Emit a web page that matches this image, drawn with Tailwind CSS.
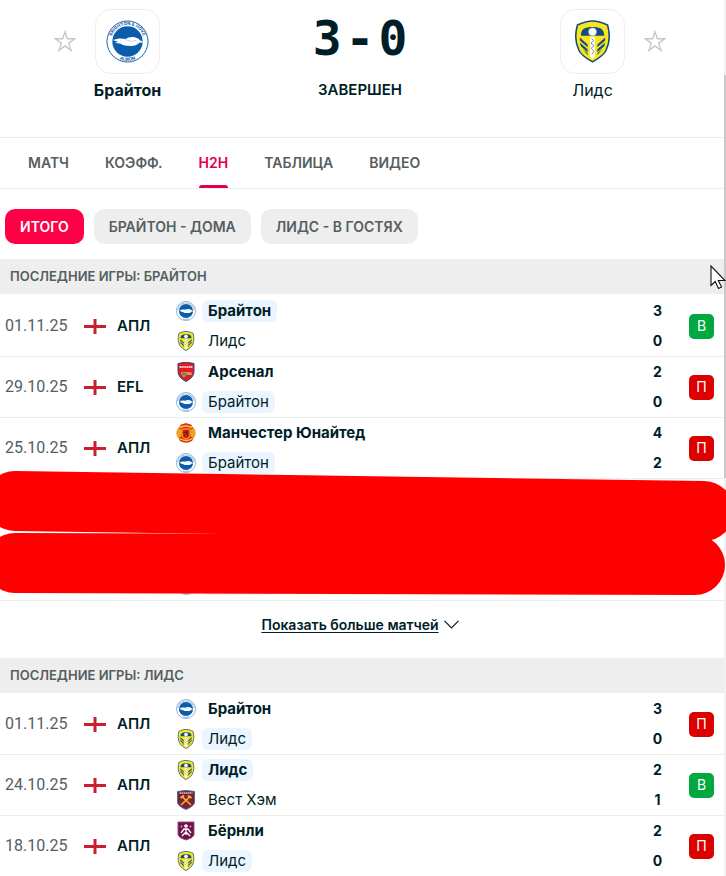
<!DOCTYPE html>
<html lang="ru">
<head>
<meta charset="utf-8">
<meta name="viewport" content="width=device-width, initial-scale=1">
<title>Брайтон – Лидс: H2H</title>
<script src="https://cdn.jsdelivr.net/npm/@tailwindcss/browser@4"></script>
</head>
<body class="relative overflow-x-hidden bg-white font-['Inter',sans-serif] text-[#001e28]">

<svg class="absolute h-0 w-0" aria-hidden="true">
  <symbol id="star" viewBox="0 0 24 24"><path d="M12 1.800l2.500 7.700h8.200l-6.600 4.800 2.500 7.900-6.600-4.900-6.600 4.900 2.500-7.900L1.300 9.500h8.200z" fill="none" stroke="#c4c8ca" stroke-width="1.500"/></symbol>
  <symbol id="brighton-core" viewBox="0 0 44 44">
    <circle cx="22" cy="22" r="21" fill="#fff" stroke="#1560a8" stroke-width="1"/>
    <circle cx="22" cy="22" r="15.500" fill="#0b5cab"/>
    <path d="M7 20.500c5-2 9-2 13-1 3-2.500 9-3 13-.5l2 2c1.500.3 3 1.500 2.500 2.300l-3-.3c-1.500 2-5 3.500-9 3.500-5 0-8-.5-11-2.500l-6-.5 4-1z" fill="#fff"/>
    <path d="M20 20q5 3 11 1" fill="none" stroke="#b9d2e8" stroke-width="1"/>
  </symbol>
  <symbol id="brighton" viewBox="0 0 44 44">
    <use href="#brighton-core"/>
    <path d="M4 20a18.200 18.200 0 0 1 36 0M15 39q7 3 14 0" fill="none" stroke="#7fa8d2" stroke-width="2.500" stroke-dasharray="2 1.200"/>
  </symbol>
  <symbol id="leeds" viewBox="0 0 36 44">
    <path d="M18 1C12 1 7 3 2.500 5 0 14 0 23 4 31c3 6 9 9 14 12 5-3 11-6 14-12 4-8 4-17 1.500-26C29 3 24 1 18 1z" fill="#f8e71c" stroke="#174a83" stroke-width="1.600"/>
    <path d="M6 16C6 9 10 7 18 7s12 2 12 9z" fill="#174a83"/>
    <path d="M5 18l8 7v3l-8-7zM5 23l8 7v3l-7-6zM8 30l5 4v2zM31 18l-8 7v3l8-7zM31 23l-8 7v3l7-6zM28 30l-5 4v2z" fill="#174a83"/>
    <circle cx="18" cy="12" r="4" fill="#fff" stroke="#b7cce0" stroke-width=".8"/>
    <path d="M15.500 17.500h5v20L18 40l-2.500-2.500z" fill="#fff"/>
    <path d="M17 19l2.500 2-3 2.500 3 3-3 2.500 3 3-2 3" fill="none" stroke="#6d8cad" stroke-width="1"/>
  </symbol>
  <symbol id="arsenal" viewBox="0 0 20 20">
    <path d="M2 1.500Q10-1 18 1.500v8q0 6-8 10-8-4-8-10z" fill="#e31c23" stroke="#37426f" stroke-width="1"/>
    <path d="M3.500 5h13" stroke="#fff" stroke-width="1.600" stroke-dasharray="1.500 .4"/>
    <path d="M5 10h9l2 1v2H5z" fill="#c29b63"/><circle cx="8" cy="13.500" r="2.300" fill="#a98d60" stroke="#7f2732" stroke-width=".6"/>
  </symbol>
  <symbol id="united" viewBox="0 0 20 20">
    <circle cx="10" cy="10" r="9" fill="#d92b16"/>
    <path d="M4 2l6-2 6 2-2 3H6zM4 18q6 3.500 12 0l1.500-3h-15z" fill="#dc2e17"/>
    <path d="M2.500 4.500Q-2 10 2.500 15.500l3-2.500V7zM17.500 4.500q4.500 5.500 0 11l-3-2.500V7z" fill="#eda220"/>
    <path d="M4 4.500q6-3 12 0M3.500 15.500q6.500 4 13 0" fill="none" stroke="#ffd43b" stroke-width="1.400"/>
    <path d="M6 6h8v6q0 3-4 4-4-1-4-4z" fill="#d52515" stroke="#fbcb2d" stroke-width=".9"/>
    <path d="M9 8h2v3l1 3M9 11l-1 3M7.500 9.500H12" fill="none" stroke="#6d2012" stroke-width="1"/>
  </symbol>
  <symbol id="westham" viewBox="0 0 20 20">
    <path d="M1.500 1.500Q10-.5 18.500 1.500V12q0 4-8.500 7.500Q1.500 16 1.500 12z" fill="#7a2139" stroke="#4c6d8e" stroke-width="1"/>
    <path d="M3.500 3h13" stroke="#d8bfc5" stroke-width="1.500" stroke-dasharray="1.500 .5"/>
    <path d="M5 15l9-8.500M15 15L6 6.500" stroke="#f3b52f" stroke-width="1.600"/>
    <path d="M4.500 8L8 5.500M12 5.500L15.500 8" stroke="#f3b52f" stroke-width="2"/>
  </symbol>
  <symbol id="burnley" viewBox="0 0 20 20">
    <path d="M2 1h16v13q-1 3-8 5-7-2-8-5z" fill="#70114d" stroke="#8e507a" stroke-width="1"/>
    <path d="M10 3v4M8 5h4M5 12l3-4h4l3 4M10 8v6M6 15l4-4 4 4" fill="none" stroke="#fff" stroke-width="1.300"/>
    <circle cx="5.500" cy="5.500" r="1" fill="#cfa2c0"/><circle cx="14.500" cy="5.500" r="1" fill="#cfa2c0"/>
  </symbol>
</svg>

<header class="flex h-[137px] items-start justify-between pt-[9px] pr-[60px] pl-[54px]">
  <div class="flex gap-[19px]">
    <button class="mt-5 h-6 w-[22px]" aria-label="Добавить Брайтон в избранное"><svg class="h-6 w-[22px]"><use href="#star"/></svg></button>
    <div class="flex w-[65px] flex-col items-center">
      <div class="flex h-[65px] w-[65px] items-center justify-center rounded-2xl border border-[#eeeeee]">
        <svg class="h-[43px] w-[43px]" viewBox="0 0 44 44">
          <use href="#brighton-core"/>
          <path id="arc-top" d="M5 22a17 17 0 0 1 34 0" fill="none"/>
          <path id="arc-bottom" d="M2.200 22a19.800 19.800 0 0 0 39.600 0" fill="none"/>
          <g fill="#1560a8" font-weight="700" font-size="4.500" text-anchor="middle">
            <text><textPath href="#arc-top" startOffset="50%">BRIGHTON &amp; HOVE</textPath></text>
            <text><textPath href="#arc-bottom" startOffset="50%">ALBION</textPath></text>
          </g>
        </svg>
      </div>
      <a href="#" class="mt-1 text-base leading-6 font-bold whitespace-nowrap">Брайтон</a>
    </div>
  </div>
  <div class="flex flex-col items-center">
    <div class="flex h-[58px] items-center gap-1 font-['DejaVu_Sans_Mono',monospace] text-[48px] font-bold"><span>3</span><span>-</span><span>0</span></div>
    <div class="mt-[11px] text-[15px] leading-6 font-semibold">ЗАВЕРШЕН</div>
  </div>
  <div class="flex gap-[19px]">
    <div class="flex w-[65px] flex-col items-center">
      <div class="flex h-[65px] w-[65px] items-center justify-center rounded-2xl border border-[#eeeeee]"><svg class="h-[43px] w-[35px]"><use href="#leeds"/></svg></div>
      <a href="#" class="mt-1 text-base leading-6 whitespace-nowrap">Лидс</a>
    </div>
    <button class="mt-5 h-6 w-[22px]" aria-label="Добавить Лидс в избранное"><svg class="h-6 w-[22px]"><use href="#star"/></svg></button>
  </div>
</header>

<nav class="flex h-[52px] gap-9 border-y border-[#eeeeee] px-7 text-sm font-semibold text-[#555e61]">
  <a href="#" class="flex items-center">МАТЧ</a>
  <a href="#" class="flex items-center">КОЭФФ.</a>
  <a href="#" class="relative flex items-center text-[#e00046]">H2H<span class="absolute inset-x-0 bottom-0 h-[3px] rounded-t-sm bg-[#e00046]"></span></a>
  <a href="#" class="flex items-center">ТАБЛИЦА</a>
  <a href="#" class="flex items-center">ВИДЕО</a>
</nav>

<div class="flex gap-[10px] px-[5px] pt-5 pb-[15px] text-sm font-semibold text-[#555e61]">
  <button class="h-[35px] rounded-[10px] bg-[#ff0046] px-[15px] text-white">ИТОГО</button>
  <button class="h-[35px] rounded-[10px] bg-[#eeeeee] px-[15px]">БРАЙТОН - ДОМА</button>
  <button class="h-[35px] rounded-[10px] bg-[#eeeeee] px-[15px]">ЛИДС - В ГОСТЯХ</button>
</div>

<section>
  <h2 class="flex h-[35px] items-center bg-[#eeeeee] px-[10px] text-[13px] font-semibold text-[#555e61]">ПОСЛЕДНИЕ ИГРЫ: БРАЙТОН</h2>
  <table class="mt-[2px] block w-full"><tbody id="home-games" class="block"></tbody></table>
  <div class="relative z-10 flex h-[122px] items-end border-b border-[#eeeeee] pb-[5px] pl-44">
    <svg class="h-5 w-5"><use href="#brighton"/></svg><span class="ml-[6px] h-[22px] w-[74px] rounded-md bg-[#ebf5ff]"></span>
    <svg class="absolute inset-x-0 -top-2 h-32 w-full" viewBox="0 0 726 128" preserveAspectRatio="none" aria-hidden="true">
      <g stroke="#ff0000" stroke-width="60" stroke-linecap="round"><path d="M15 30L704 40"/><path d="M15 92L695 94"/></g>
    </svg>
  </div>
  <div class="flex h-[57px] items-center justify-center pr-[6px] pb-[10px]">
    <button class="flex items-center gap-[5px] text-sm font-semibold"><span class="underline underline-offset-2">Показать больше матчей</span>
      <svg class="h-[9px] w-[15px]" viewBox="0 0 15 9" fill="none" stroke="#001e28" stroke-width="1.200"><path d="M.5.800l7 7 7-7"/></svg></button>
  </div>
</section>

<section>
  <h2 class="flex h-[35px] items-center bg-[#eeeeee] px-[10px] text-[13px] font-semibold text-[#555e61]">ПОСЛЕДНИЕ ИГРЫ: ЛИДС</h2>
  <table class="mt-px block w-full"><tbody id="away-games" class="block"></tbody></table>
</section>

<div class="absolute inset-y-0 right-0 w-[2px] bg-[#f1f1f1] pt-[75px]"><div class="h-[403px] bg-[#c8c8c8]"></div></div>
<svg class="absolute top-[265px] left-[710px] h-6 w-4" viewBox="0 0 16 24" aria-hidden="true"><path d="M1 1v19.500l4.200-4 3.300 7 3-1.400-3.200-6.600H15z" fill="#fff" stroke="#111" stroke-width="1.100"/></svg>

<script>
// Each match: date, league, [crest, name, goals] for both sides, winner index, highlighted index, result
const home = [
  ['01.11.25', 'АПЛ', [['brighton', 'Брайтон', 3], ['leeds', 'Лидс', 0]], 0, 0, 'В'],
  ['29.10.25', 'EFL', [['arsenal', 'Арсенал', 2], ['brighton', 'Брайтон', 0]], 0, 1, 'П'],
  ['25.10.25', 'АПЛ', [['united', 'Манчестер Юнайтед', 4], ['brighton', 'Брайтон', 2]], 0, 1, 'П'],
];
const away = [
  ['01.11.25', 'АПЛ', [['brighton', 'Брайтон', 3], ['leeds', 'Лидс', 0]], 0, 1, 'П'],
  ['24.10.25', 'АПЛ', [['leeds', 'Лидс', 2], ['westham', 'Вест Хэм', 1]], 0, 0, 'В'],
  ['18.10.25', 'АПЛ', [['burnley', 'Бёрнли', 2], ['leeds', 'Лидс', 0]], 0, 1, 'П'],
];
const row = ([date, league, teams, winner, marked, result]) => `
  <tr class="flex h-[61px] items-center border-b border-[#eeeeee] pr-3 pl-[5px]">
    <td class="w-[79px] font-['Roboto',sans-serif] text-base text-[#555e61]">${date}</td>
    <td class="flex w-[92px] items-center gap-[11px] text-[15px] font-semibold">
      <svg class="h-[15px] w-[22px]" viewBox="0 0 22 15"><path d="M0 7.500h22M11 0v15" stroke="#c8202f" stroke-width="3"/></svg>${league}</td>
    <td class="flex-1">${teams.map(([crest, name], i) => `
      <div class="flex h-[30px] items-center gap-[6px]"><svg class="h-5 w-5"><use href="#${crest}"/></svg>
        <span class="rounded-md px-[6px] text-[15px] leading-[22px] ${i === marked ? 'bg-[#ebf5ff]' : ''} ${i === winner ? 'font-bold' : ''}">${name}</span></div>`).join('')}</td>
    <td class="w-[13px] text-center text-sm leading-[30px] font-bold">${teams.map(t => `<div>${t[2]}</div>`).join('')}</td>
    <td class="ml-[25px]"><span class="flex h-[25px] w-[25px] items-center justify-center rounded-[5px] text-sm text-white ${result === 'В' ? 'bg-[#00a83f]' : 'bg-[#dc0000]'}">${result}</span></td>
  </tr>`;
document.getElementById('home-games').innerHTML = home.map(row).join('');
document.getElementById('away-games').innerHTML = away.map(row).join('');
</script>
</body>
</html>
